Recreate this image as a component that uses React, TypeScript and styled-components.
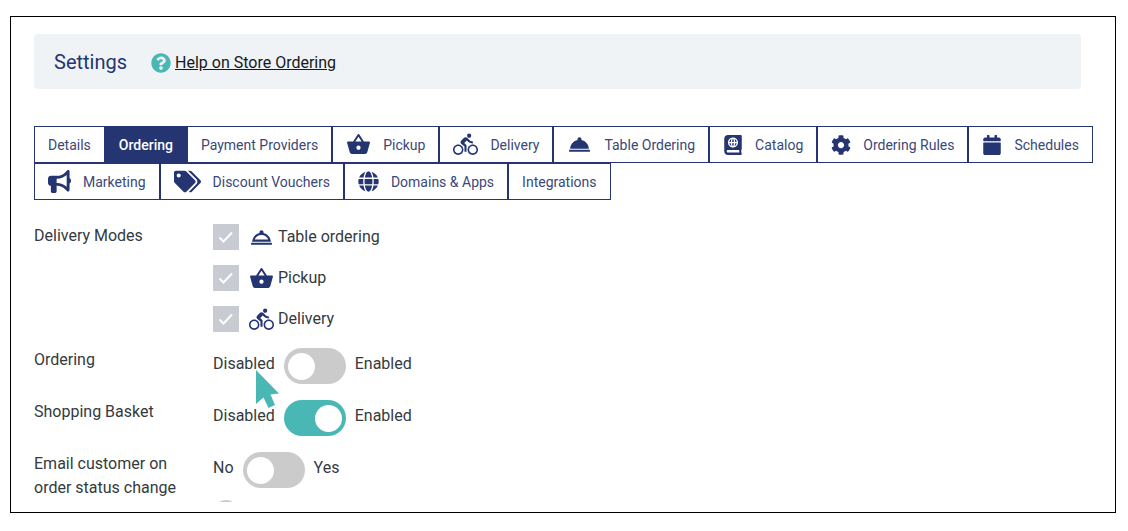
import React from "react";
import styled, { createGlobalStyle } from "styled-components";
import { FaAtlas, FaCalendar, FaCog, FaGlobe, FaQuestionCircle, FaTags } from "react-icons/fa";
import { FaBullhorn } from "react-icons/fa6";
import { MdDirectionsBike, MdOutlineRoomService, MdRoomService, MdShoppingBasket } from "react-icons/md";

const navy = "#253572";
const teal = "#49b8b4";

const GlobalStyle = createGlobalStyle`
  * { box-sizing: border-box; }
  body {
    margin: 0;
    background: #fff;
    color: #343a40;
    font-family: Roboto, "Liberation Sans", sans-serif;
    font-size: 16px;
    line-height: 24px;
  }
`;

const Frame = styled.main`
  margin: 16px 12px 16px 10px;
  padding: 17px 16px 10px 23px;
  border: 1px solid #000;
`;

const Header = styled.header`
  display: flex;
  align-items: center;
  gap: 24px;
  min-height: 55px;
  margin-right: 18px;
  padding: 0 20px;
  border-radius: 4px;
  background: #eff3f6;
`;

const Title = styled.h1`
  margin: 0;
  color: ${navy};
  font-size: 20px;
  font-weight: 400;
`;

const HelpLink = styled.a`
  display: flex;
  align-items: center;
  gap: 4px;
  padding-top: 2px;
  color: #16181b;
  text-decoration: none;

  svg { color: ${teal}; }
  span { text-decoration: underline; }
`;

const TabBar = styled.nav`
  display: flex;
  flex-wrap: wrap;
  margin-top: 37px;
`;

const Tab = styled.button<{ $active?: boolean }>`
  display: flex;
  align-items: center;
  gap: 12px;
  height: 37px;
  padding: 0 13px;
  border: 1px solid ${navy};
  background: ${(p) => (p.$active ? navy : "#fff")};
  color: ${(p) => (p.$active ? "#fff" : "#3b4878")};
  font-family: inherit;
  font-size: 14px;
  font-weight: ${(p) => (p.$active ? 500 : 400)};
  white-space: nowrap;

  svg { color: ${navy}; }
`;

const Form = styled.form`
  display: flex;
  flex-direction: column;
  gap: 16px;
  margin-top: 24px;
`;

const Row = styled.div`
  display: grid;
  grid-template-columns: 159px 1fr;
  column-gap: 20px;
`;

const Modes = styled.div`
  display: flex;
  flex-direction: column;
  gap: 15px;
`;

const Mode = styled.label`
  display: flex;
  align-items: center;
  height: 26px;

  svg { margin: 0 4px 0 10px; color: ${navy}; }
`;

const CheckBox = styled.span`
  position: relative;
  display: flex;
  width: 26px;
  height: 26px;

  input {
    width: 26px;
    height: 26px;
    margin: 0;
    appearance: none;
    background: #c8ccd2;
  }

  svg {
    position: absolute;
    inset: 0;
    margin: 0;
    color: #fff;
    pointer-events: none;
  }
`;

const Controls = styled.div`
  display: flex;
  flex-direction: column;
  gap: 12px;
`;

const SwitchLabel = styled.label`
  position: relative;
  display: flex;
  align-items: center;
  gap: 9px;
  height: 36px;
  width: fit-content;

  span { padding-bottom: 4px; }
`;

const Switch = styled.input`
  width: 62px;
  height: 36px;
  margin: 0;
  padding: 5px 4px;
  border-radius: 18px;
  appearance: none;
  background: #cbcbcb;

  &::before {
    content: "";
    display: block;
    width: 27px;
    height: 27px;
    border-radius: 50%;
    background: #fff;
  }

  &:checked { background: ${teal}; }
  &:checked::before { margin-left: auto; }
`;

const Pointer = styled.svg`
  position: absolute;
  top: 21px;
  left: 42px;
  z-index: 1;
  color: ${teal};
  pointer-events: none;
`;

const NextOption = styled.div`
  height: 2px;
  overflow: hidden;

  input {
    display: block;
    width: 26px;
    height: 26px;
    margin: 0;
    border-radius: 50%;
    appearance: none;
    background: #cbcbcb;
  }
`;

const tabs: { label: string; icon?: React.ReactNode }[] = [
  { label: "Details" },
  { label: "Ordering" },
  { label: "Payment Providers" },
  { label: "Pickup", icon: <MdShoppingBasket size={25} /> },
  { label: "Delivery", icon: <MdDirectionsBike size={25} /> },
  { label: "Table Ordering", icon: <MdRoomService size={25} /> },
  { label: "Catalog", icon: <FaAtlas size={20} /> },
  { label: "Ordering Rules", icon: <FaCog size={20} /> },
  { label: "Schedules", icon: <FaCalendar size={20} /> },
  { label: "Marketing", icon: <FaBullhorn size={23} /> },
  { label: "Discount Vouchers", icon: <FaTags size={27} /> },
  { label: "Domains & Apps", icon: <FaGlobe size={21} /> },
  { label: "Integrations" },
];

const modes = [
  { label: "Table ordering", Icon: MdOutlineRoomService },
  { label: "Pickup", Icon: MdShoppingBasket },
  { label: "Delivery", Icon: MdDirectionsBike },
];

function Toggle({ off, on, checked, children }: { off: string; on: string; checked?: boolean; children?: React.ReactNode }) {
  return (
    <SwitchLabel>
      <span>{off}</span>
      <Switch type="checkbox" role="switch" defaultChecked={checked} />
      <span>{on}</span>
      {children}
    </SwitchLabel>
  );
}

export default function App() {
  return (
    <>
      <GlobalStyle />
      <Frame>
        <Header>
          <Title>Settings</Title>
          <HelpLink href="#help">
            <FaQuestionCircle size={20} />
            <span>Help on Store Ordering</span>
          </HelpLink>
        </Header>
        <TabBar>
          {tabs.map(({ label, icon }) => (
            <Tab key={label} type="button" $active={label === "Ordering"}>
              {icon}
              {label}
            </Tab>
          ))}
        </TabBar>
        <Form>
          <Row>
            <span>Delivery Modes</span>
            <Modes>
              {modes.map(({ label, Icon }) => (
                <Mode key={label}>
                  <CheckBox>
                    <input type="checkbox" defaultChecked />
                    <svg width="26" height="26" viewBox="0 0 26 26" fill="none" stroke="currentColor" strokeWidth="2">
                      <path d="M6.500 13.500l4 4L19 8.500" />
                    </svg>
                  </CheckBox>
                  <Icon size={25} />
                  {label}
                </Mode>
              ))}
            </Modes>
          </Row>
          <Row>
            <span>Ordering</span>
            <Toggle off="Disabled" on="Enabled">
              <Pointer width="25" height="40" viewBox="0 0 25 40" fill="currentColor" aria-hidden="true">
                <path d="M1 1L24 24.500L15.500 25.500L20 36L13.500 39L8.500 28.500L1 35Z" />
              </Pointer>
            </Toggle>
          </Row>
          <Row>
            <span>Shopping Basket</span>
            <Toggle off="Disabled" on="Enabled" checked />
          </Row>
          <Row>
            <span>Email customer on order status change</span>
            <Controls>
              <Toggle off="No" on="Yes" />
              <NextOption>
                <input type="radio" aria-label="Next option" />
              </NextOption>
            </Controls>
          </Row>
        </Form>
      </Frame>
    </>
  );
}
